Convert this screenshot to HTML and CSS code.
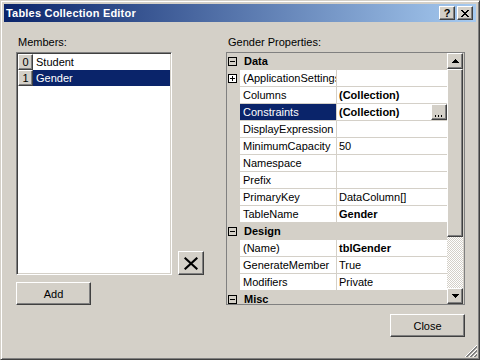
FILE: index.html
```html
<!DOCTYPE html>
<html>
<head>
<meta charset="utf-8">
<link rel="stylesheet" href="styles.css">
</head>
<body>
<div class="window">
  <div class="titlebar">
    <span class="title">Tables Collection Editor</span>
    <div class="cbtns">
      <span class="cbtn raised q">?</span>
      <span class="cbtn raised">
        <svg width="8" height="7" viewBox="0 0 8 7" shape-rendering="crispEdges"><path d="M0 0h2v1h-2zM6 0h2v1h-2zM1 1h2v1h-2zM5 1h2v1h-2zM2 2h4v1h-4zM3 3h2v1h-2zM2 4h4v1h-4zM1 5h2v1h-2zM5 5h2v1h-2zM0 6h2v1h-2zM6 6h2v1h-2z" fill="#000"/></svg>
      </span>
    </div>
  </div>
  <div class="content">
    <div class="left">
      <div class="label">Members:</div>
      <div class="listrow">
        <div class="listbox">
          <div class="item"><span class="idx raised">0</span><span class="iname">Student</span></div>
          <div class="item sel"><span class="idx raised">1</span><span class="iname">Gender</span></div>
        </div>
        <button class="btn raised del">
          <svg width="14" height="13" viewBox="0 0 14 13"><path d="M1.5 1.5 L12.5 11.5 M12.5 1.5 L1.5 11.5" stroke="#000" stroke-width="2.2" stroke-linecap="square" fill="none"/></svg>
        </button>
      </div>
      <button class="btn raised add">Add</button>
    </div>
    <div class="right">
      <div class="label">Gender Properties:</div>
      <div class="grid">
        <div class="rows">
          <div class="row cat"><span class="gut"><svg width="9" height="9" viewBox="0 0 9 9" shape-rendering="crispEdges"><rect x="0.5" y="0.5" width="8" height="8" fill="none" stroke="#000"/><path d="M2 4h5v1h-5z" fill="#000"/></svg></span><span class="ctext">Data</span></div>
          <div class="row"><span class="gut"><svg width="9" height="9" viewBox="0 0 9 9" shape-rendering="crispEdges"><rect x="0.5" y="0.5" width="8" height="8" fill="#fff" stroke="#000"/><path d="M2 4h5v1h-5zM4 2h1v5h-1z" fill="#000"/></svg></span><span class="pn">(ApplicationSettings)</span><span class="pv"><span class="v"></span></span></div>
          <div class="row"><span class="gut"></span><span class="pn">Columns</span><span class="pv"><span class="v b">(Collection)</span></span></div>
          <div class="row"><span class="gut"></span><span class="pn sel">Constraints</span><span class="pv"><span class="v b">(Collection)</span><span class="ell raised"><svg width="14" height="14" viewBox="0 0 14 14" shape-rendering="crispEdges"><path d="M3 10h1v2h-1zM6 10h1v2h-1zM9 10h1v2h-1z" fill="#000"/></svg></span></span></div>
          <div class="row"><span class="gut"></span><span class="pn">DisplayExpression</span><span class="pv"><span class="v"></span></span></div>
          <div class="row"><span class="gut"></span><span class="pn">MinimumCapacity</span><span class="pv"><span class="v">50</span></span></div>
          <div class="row"><span class="gut"></span><span class="pn">Namespace</span><span class="pv"><span class="v"></span></span></div>
          <div class="row"><span class="gut"></span><span class="pn">Prefix</span><span class="pv"><span class="v"></span></span></div>
          <div class="row"><span class="gut"></span><span class="pn">PrimaryKey</span><span class="pv"><span class="v">DataColumn[]</span></span></div>
          <div class="row"><span class="gut"></span><span class="pn">TableName</span><span class="pv"><span class="v b">Gender</span></span></div>
          <div class="row cat"><span class="gut"><svg width="9" height="9" viewBox="0 0 9 9" shape-rendering="crispEdges"><rect x="0.5" y="0.5" width="8" height="8" fill="none" stroke="#000"/><path d="M2 4h5v1h-5z" fill="#000"/></svg></span><span class="ctext">Design</span></div>
          <div class="row"><span class="gut"></span><span class="pn">(Name)</span><span class="pv"><span class="v b">tblGender</span></span></div>
          <div class="row"><span class="gut"></span><span class="pn">GenerateMember</span><span class="pv"><span class="v">True</span></span></div>
          <div class="row"><span class="gut"></span><span class="pn">Modifiers</span><span class="pv"><span class="v">Private</span></span></div>
          <div class="row cat"><span class="gut"><svg width="9" height="9" viewBox="0 0 9 9" shape-rendering="crispEdges"><rect x="0.5" y="0.5" width="8" height="8" fill="none" stroke="#000"/><path d="M2 4h5v1h-5z" fill="#000"/></svg></span><span class="ctext">Misc</span></div>
        </div>
        <div class="scroll">
          <span class="sbtn raised"><svg width="7" height="4" viewBox="0 0 7 4" shape-rendering="crispEdges"><path d="M3 0h1v1h-1zM2 1h3v1h-3zM1 2h5v1h-5zM0 3h7v1h-7z" fill="#000"/></svg></span>
          <span class="thumb raised"></span>
          <span class="track"></span>
          <span class="sbtn raised"><svg width="7" height="4" viewBox="0 0 7 4" shape-rendering="crispEdges"><path d="M0 0h7v1h-7zM1 1h5v1h-5zM2 2h3v1h-3zM3 3h1v1h-1z" fill="#000"/></svg></span>
        </div>
      </div>
      <div class="closerow"><button class="btn raised close">Close</button></div>
    </div>
  </div>
  <svg class="grip" width="12" height="12" viewBox="0 0 12 12" shape-rendering="crispEdges">
    <g stroke-width="1">
      <line x1="12" y1="0" x2="0" y2="12" stroke="#fff"/>
      <line x1="12" y1="1" x2="1" y2="12" stroke="#808080"/>
      <line x1="12" y1="2" x2="2" y2="12" stroke="#808080"/>
      <line x1="12" y1="4" x2="4" y2="12" stroke="#fff"/>
      <line x1="12" y1="5" x2="5" y2="12" stroke="#808080"/>
      <line x1="12" y1="6" x2="6" y2="12" stroke="#808080"/>
      <line x1="12" y1="8" x2="8" y2="12" stroke="#fff"/>
      <line x1="12" y1="9" x2="9" y2="12" stroke="#808080"/>
      <line x1="12" y1="10" x2="10" y2="12" stroke="#808080"/>
    </g>
  </svg>
</div>
</body>
</html>
```
FILE: styles.css
```css
* { box-sizing: border-box; margin: 0; padding: 0; }
html, body { width: 480px; height: 360px; overflow: hidden; }
body {
  background: #D4D0C8;
  font-family: "Liberation Sans", Arial, sans-serif;
  font-size: 11px;
  color: #000;
}
.raised {
  background: #D4D0C8;
  border: 1px solid;
  border-color: #fff #404040 #404040 #fff;
  box-shadow: inset -1px -1px #808080;
}
.window {
  position: relative;
  width: 480px;
  height: 360px;
  border: 1px solid;
  border-color: #D4D0C8 #404040 #404040 #D4D0C8;
  box-shadow: inset 1px 1px #fff, inset -1px -1px #808080;
  padding: 3px;
  display: flex;
  flex-direction: column;
}
.titlebar {
  height: 18px;
  flex: none;
  background: linear-gradient(to right, #0A246A, #A6CAF0);
  display: flex;
  align-items: center;
  padding: 0 3px 0 2px;
}
.title { flex: 1; color: #fff; font-weight: bold; white-space: nowrap; letter-spacing: 0.2px; }
.cbtns { display: flex; gap: 2px; }
.cbtn {
  width: 16px;
  height: 14px;
  display: flex;
  align-items: center;
  justify-content: center;
}
.cbtn.q { font-weight: bold; font-size: 11px; line-height: 12px; }
.content {
  flex: 1;
  display: flex;
  gap: 22px;
  padding: 14px 0 0 12px;
}
.label { height: 16px; line-height: 13px; padding-left: 2px; white-space: nowrap; }
.left { width: 188px; display: flex; flex-direction: column; }
.listrow { display: flex; align-items: flex-end; gap: 6px; }
.listbox {
  width: 156px;
  height: 223px;
  background: #fff;
  border: 1px solid;
  border-color: #808080 #fff #fff #808080;
  box-shadow: inset 1px 1px #404040, inset -1px -1px #D4D0C8;
  padding: 1px;
}
.item { display: flex; height: 16px; }
.idx {
  width: 15px;
  flex: none;
  text-align: center;
  line-height: 14px;
}
.iname { flex: 1; padding-left: 3px; line-height: 16px; }
.item.sel .iname { background: #0A246A; color: #fff; }
.btn {
  font-family: inherit;
  font-size: 11px;
  color: #000;
  display: flex;
  align-items: center;
  justify-content: center;
}
.del { width: 26px; height: 24px; }
.add { width: 75px; height: 23px; margin-top: 7px; }
.right { width: 239px; display: flex; flex-direction: column; }
.grid {
  height: 253px;
  border: 1px solid #808080;
  display: flex;
  background: #D4D0C8;
}
.rows { width: 220px; overflow: hidden; flex: none; }
.row {
  height: 17px;
  display: flex;
  border-bottom: 1px solid #D4D0C8;
  background: #D4D0C8;
}
.gut {
  width: 13px;
  flex: none;
  display: flex;
  align-items: center;
  padding-left: 1px;
}
.gut svg { display: block; }
.ctext { font-weight: bold; padding: 1px 0 0 4px; line-height: 15px; }
.pn {
  width: 97px;
  flex: none;
  background: #fff;
  border-right: 1px solid #D4D0C8;
  padding: 1px 0 0 3px;
  line-height: 15px;
  white-space: nowrap;
  overflow: hidden;
}
.pn.sel { background: #0A246A; color: #fff; }
.pv { flex: 1; background: #fff; display: flex; }
.v { flex: 1; padding: 1px 0 0 2px; line-height: 15px; white-space: nowrap; overflow: hidden; }
.b { font-weight: bold; }
.ell { width: 16px; height: 16px; flex: none; display: block; }
.ell svg { display: block; }
.scroll { width: 16px; flex: none; display: flex; flex-direction: column; }
.sbtn {
  height: 16px;
  flex: none;
  display: flex;
  align-items: center;
  justify-content: center;
}
.thumb { height: 168px; flex: none; }
.track {
  flex: 1;
  background: repeating-conic-gradient(#fff 0 25%, #D4D0C8 0 50%) 0 0 / 2px 2px;
}
.closerow { display: flex; justify-content: flex-end; margin-top: 9px; }
.close { width: 75px; height: 23px; }
.grip { position: absolute; right: 2px; bottom: 2px; }
```
